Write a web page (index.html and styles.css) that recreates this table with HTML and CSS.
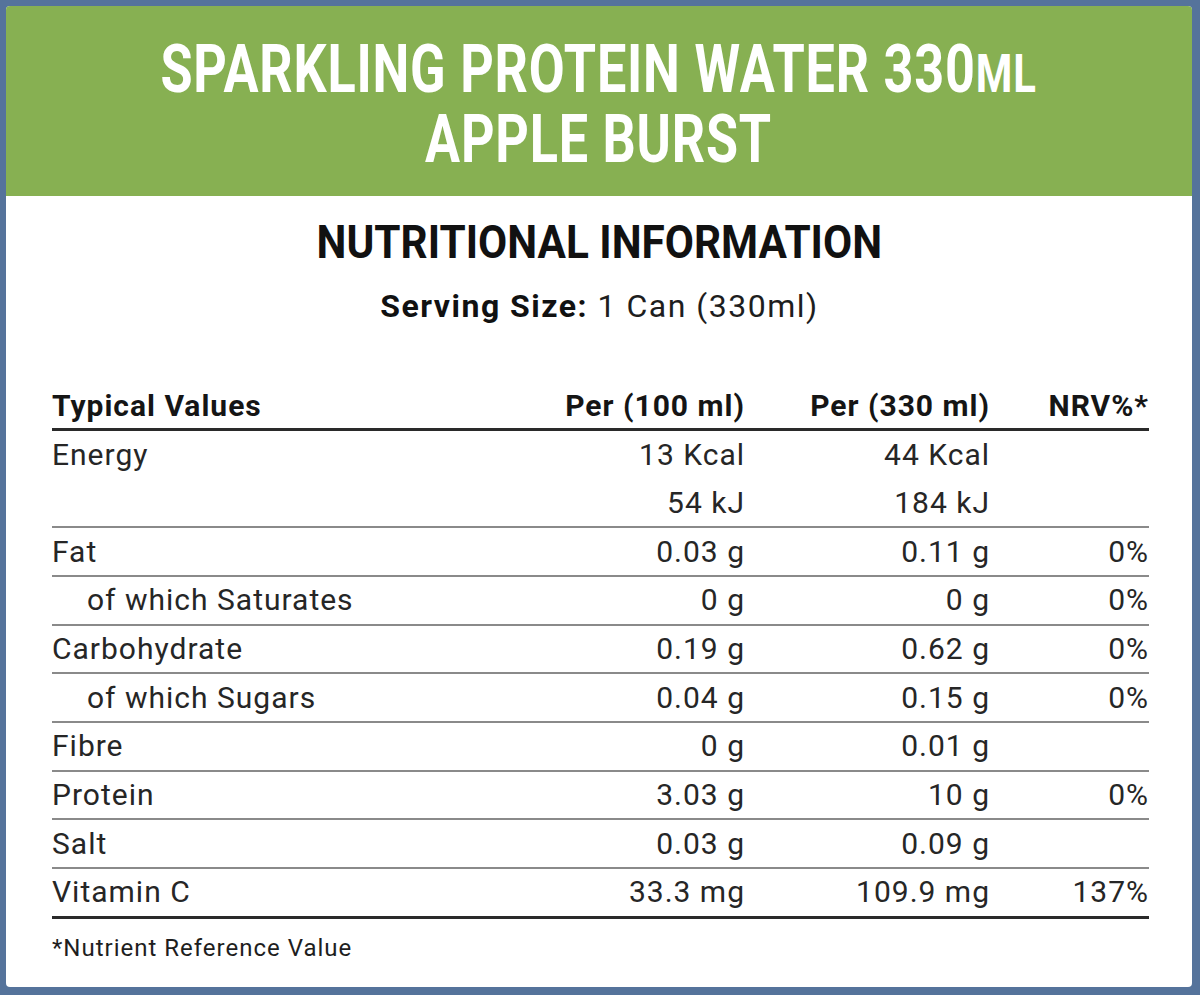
FILE: index.html
```html
<!DOCTYPE html>
<html lang="en">
<head>
<meta charset="utf-8">
<title>Sparkling Protein Water 330ml Apple Burst – Nutritional Information</title>
<link rel="stylesheet" href="styles.css">
</head>
<body>
<div class="card">
  <header class="banner">
    <h1 class="title">
      <span class="title-line">SPARKLING PROTEIN WATER 330<span class="sc">ML</span></span>
      <span class="title-line">APPLE BURST</span>
    </h1>
  </header>
  <main class="content">
    <h2 class="heading">NUTRITIONAL INFORMATION</h2>
    <p class="serving"><strong>Serving Size:</strong> 1 Can (330ml)</p>
    <table class="nutri">
      <colgroup>
        <col class="c-name"><col class="c-val"><col class="c-val"><col class="c-nrv">
      </colgroup>
      <thead>
        <tr><th class="name">Typical Values</th><th>Per (100 ml)</th><th>Per (330 ml)</th><th>NRV%*</th></tr>
      </thead>
      <tbody>
        <tr class="no-line"><td class="name">Energy</td><td>13 Kcal</td><td>44 Kcal</td><td></td></tr>
        <tr><td class="name"></td><td>54 kJ</td><td>184 kJ</td><td></td></tr>
        <tr><td class="name">Fat</td><td>0.03 g</td><td>0.11 g</td><td>0%</td></tr>
        <tr><td class="name sub">of which Saturates</td><td>0 g</td><td>0 g</td><td>0%</td></tr>
        <tr><td class="name">Carbohydrate</td><td>0.19 g</td><td>0.62 g</td><td>0%</td></tr>
        <tr><td class="name sub">of which Sugars</td><td>0.04 g</td><td>0.15 g</td><td>0%</td></tr>
        <tr><td class="name">Fibre</td><td>0 g</td><td>0.01 g</td><td></td></tr>
        <tr><td class="name">Protein</td><td>3.03 g</td><td>10 g</td><td>0%</td></tr>
        <tr><td class="name">Salt</td><td>0.03 g</td><td>0.09 g</td><td></td></tr>
        <tr class="last"><td class="name">Vitamin C</td><td>33.3 mg</td><td>109.9 mg</td><td>137%</td></tr>
      </tbody>
    </table>
    <p class="footnote">*Nutrient Reference Value</p>
  </main>
</div>
</body>
</html>
```

FILE: styles.css
```css
html, body {
  margin: 0;
  padding: 0;
}

body {
  background: #55739b;
  width: 1200px;
  height: 995px;
  overflow: hidden;
  font-family: Roboto, "Liberation Sans", sans-serif;
  color: #262626;
}

.card {
  margin: 6px 8px 8px 6px;
  height: 981px;
  background: #ffffff;
  border-radius: 4px;
  overflow: hidden;
  display: flex;
  flex-direction: column;
}

.banner {
  background: #87b052;
  height: 190px;
  box-sizing: border-box;
  padding-top: 31px;
  display: flex;
  justify-content: center;
}

.title {
  margin: 0;
  display: flex;
  flex-direction: column;
  align-items: center;
  color: #ffffff;
  font-weight: 700;
  font-size: 66px;
  line-height: 66px;
  transform: scaleX(0.79);
  letter-spacing: 1px;
}

.title-line {
  white-space: nowrap;
}

.sc {
  font-size: 53px;
}

.content {
  padding: 0 45px 0 46px;
  display: flex;
  flex-direction: column;
  align-items: center;
}

.heading {
  margin: 23px 0 0;
  font-size: 46px;
  line-height: 46px;
  font-weight: 700;
  color: #111111;
  transform: scaleX(0.92);
  white-space: nowrap;
}

.serving {
  margin: 25px 0 0;
  font-size: 32px;
  line-height: 32px;
  letter-spacing: 1.5px;
  color: #1e1e1e;
}

.serving strong {
  font-weight: 700;
  color: #111111;
}

.nutri {
  margin-top: 69px;
  width: 1097px;
  margin-right: -2px;
  border-collapse: collapse;
  font-size: 30px;
  line-height: 30px;
  letter-spacing: 1px;
}

.c-name { width: 448px; }
.c-val { width: 245px; }
.c-nrv { width: 159px; }

.nutri th {
  font-weight: 700;
  color: #151515;
  text-align: right;
  padding: 0 0 7px;
  border-bottom: 3px solid #2a2a2a;
  white-space: nowrap;
}

.nutri td {
  text-align: right;
  padding: 0;
  height: 46.7px;
  vertical-align: middle;
  border-bottom: 2px solid #8a8a8a;
  white-space: nowrap;
}

.nutri .name {
  text-align: left;
}

.nutri .sub {
  padding-left: 35px;
}

.nutri tr.no-line td {
  border-bottom: none;
  height: 48.6px;
}

.nutri tr.last td {
  border-bottom: 3px solid #2a2a2a;
}

.footnote {
  align-self: flex-start;
  margin: 17px 0 0;
  font-size: 24px;
  line-height: 24px;
  letter-spacing: 1px;
  color: #1e1e1e;
}
```
